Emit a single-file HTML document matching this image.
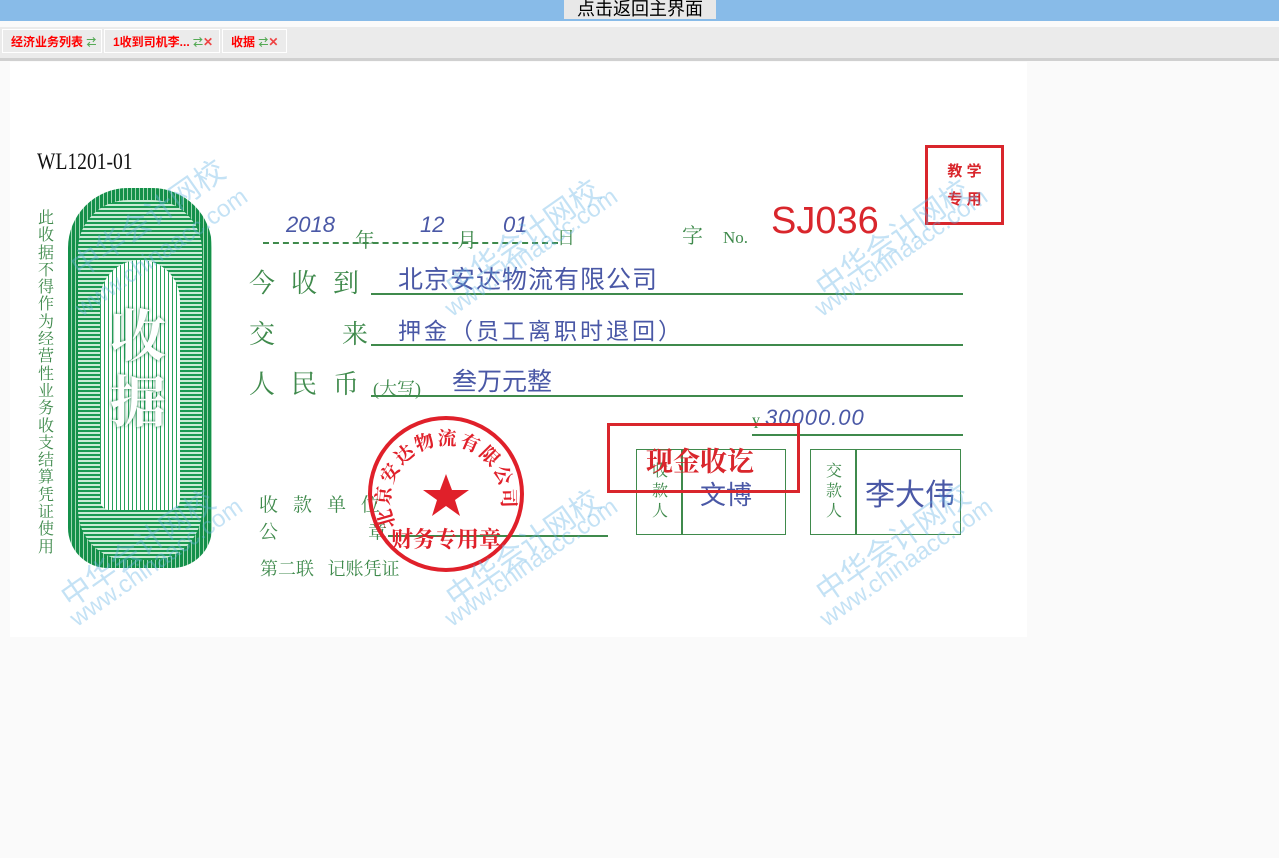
<!DOCTYPE html>
<html><head><meta charset="utf-8"><style>
body{margin:0;width:1279px;height:858px;background:#fafafa;font-family:"Liberation Sans","Noto Sans CJK SC",sans-serif;position:relative;overflow:hidden}
.a{position:absolute;white-space:nowrap}
.g{color:#3f8a4c;font-family:"Liberation Serif","Noto Serif CJK SC",serif}
.b{color:#4a58a6;font-family:"Liberation Sans","WenQuanYi Zen Hei",sans-serif;font-style:italic}
.ln{position:absolute;height:2px;background:#3f8a4c}
.tab{position:absolute;top:29px;height:24px;background:#ebebeb;border:1px solid #fff;font-size:12px;font-weight:bold;color:#f00;line-height:24px;padding-left:8px;box-sizing:border-box}
.wm{position:absolute;color:rgba(100,180,230,.38);font-size:30px;transform:rotate(-35deg);white-space:nowrap;transform-origin:left top}
</style></head><body>
<div class="a" style="left:0;top:0;width:1279px;height:21px;background:#88bbe8"></div>
<div class="a" style="left:564px;top:0;width:152px;height:19px;background:#e8e8e8;font-size:18px;line-height:19px;text-align:center;color:#000">点击返回主界面</div>
<div class="a" style="left:0;top:27px;width:1279px;height:31px;background:#ebebeb"></div>
<div class="a" style="left:0;top:58px;width:1279px;height:3px;background:#d0d0d0"></div>
<div class="tab" style="left:2px;width:100px">经济业务列表 <span style="color:#5a5;font-size:10px">⇄</span></div>
<div class="tab" style="left:104px;width:116px">1收到司机李... <span style="color:#5a5;font-size:10px">⇄</span><span style="color:#e44">✕</span></div>
<div class="tab" style="left:222px;width:65px">收据 <span style="color:#5a5;font-size:10px">⇄</span><span style="color:#e44">✕</span></div>
<div class="a" style="left:10px;top:62px;width:1017px;height:575px;background:#fff"></div>

<div class="a" style="left:37px;top:149px;font-size:23px;font-family:'Liberation Serif',serif;color:#111;transform:scaleX(.85);transform-origin:left top">WL1201-01</div>
<div class="a g" style="left:38px;top:210px;width:18px;font-size:16px;line-height:17.3px;white-space:normal">此收据不得作为经营性业务收支结算凭证使用</div>
<div class="a" style="left:68px;top:188px;width:144px;height:380px;border-radius:60px 60px 40px 40px;background:repeating-linear-gradient(90deg,#14904a 0 3px,#9fd6b2 3px 4px);"></div>
<div class="a" style="left:78px;top:200px;width:124px;height:360px;border-radius:50px;background:repeating-linear-gradient(0deg,#1a9a52 0 2px,#c9ebd5 2px 4px)"></div>
<div class="a" style="left:100px;top:260px;width:80px;height:250px;border-radius:40px 40px 10px 10px;background:repeating-linear-gradient(90deg,#26a25c 0 1px,#fff 1px 4px)"></div>
<div class="a" style="left:110px;top:300px;font-size:56px;font-weight:bold;line-height:66px;color:#fff;width:60px;text-shadow:0 0 3px #0a7a3a;font-family:'Noto Serif CJK SC',serif">收<br>据</div>

<div class="a b" style="left:286px;top:212px;font-size:22px">2018</div>
<div class="a g" style="left:355px;top:224px;font-size:20px">年</div>
<div class="a b" style="left:420px;top:212px;font-size:22px">12</div>
<div class="a g" style="left:457px;top:224px;font-size:20px">月</div>
<div class="a b" style="left:503px;top:212px;font-size:22px">01</div>
<div class="a g" style="left:557px;top:224px;font-size:18px">日</div>
<div class="a" style="left:263px;top:242px;width:295px;border-top:2px dashed #3f8a4c"></div>
<div class="a g" style="left:682px;top:220px;font-size:21px">字</div>
<div class="a g" style="left:723px;top:228px;font-size:17px">No.</div>
<div class="a" style="left:771px;top:200px;font-size:38px;color:#d9262c">SJ036</div>
<div class="a" style="left:925px;top:145px;width:79px;height:80px;border:3px solid #d9262c;color:#d9262c;font-size:15px;font-weight:bold;text-align:center;line-height:28px;padding-top:10px;box-sizing:border-box">教 学<br>专 用</div>

<div class="a g" style="left:249px;top:263px;font-size:26px;letter-spacing:16px">今收到</div>
<div class="ln" style="left:371px;top:293px;width:592px"></div>
<div class="a b" style="left:398px;top:260px;font-size:25px;font-style:normal;letter-spacing:1px">北京安达物流有限公司</div>
<div class="a g" style="left:249px;top:314px;font-size:26px">交</div>
<div class="a g" style="left:342px;top:314px;font-size:26px">来</div>
<div class="ln" style="left:371px;top:344px;width:592px"></div>
<div class="a b" style="left:398px;top:312px;font-size:23px;font-style:normal;letter-spacing:3px">押金（员工离职时退回）</div>
<div class="a g" style="left:249px;top:364px;font-size:26px;letter-spacing:16px">人民币</div>
<div class="a g" style="left:373px;top:375px;font-size:18px">(大写)</div>
<div class="a b" style="left:452px;top:362px;font-size:25px;font-style:normal">叁万元整</div>
<div class="ln" style="left:371px;top:395px;width:592px"></div>
<div class="a g" style="left:752px;top:415px;font-size:16px">¥</div>
<div class="a b" style="left:765px;top:405px;font-size:22px;letter-spacing:1px">30000.00</div>
<div class="ln" style="left:752px;top:434px;width:211px"></div>

<div class="a" style="left:636px;top:449px;width:150px;height:86px;border:1px solid #3f8a4c;box-sizing:border-box"></div>
<div class="a" style="left:681px;top:449px;width:2px;height:86px;background:#3f8a4c"></div>
<div class="a g" style="left:652px;top:462px;font-size:16px;line-height:20px;width:18px;white-space:normal">收款人</div>
<div class="a b" style="left:700px;top:475px;font-size:26px;font-style:normal">文博</div>
<div class="a" style="left:810px;top:449px;width:151px;height:86px;border:1px solid #3f8a4c;box-sizing:border-box"></div>
<div class="a" style="left:855px;top:449px;width:2px;height:86px;background:#3f8a4c"></div>
<div class="a g" style="left:826px;top:462px;font-size:16px;line-height:20px;width:18px;white-space:normal">交款人</div>
<div class="a b" style="left:865px;top:470px;font-size:30px;font-style:normal">李大伟</div>
<div class="a" style="left:607px;top:423px;width:193px;height:70px;border:3px solid #d9262c;box-sizing:border-box"></div>
<div class="a" style="left:646px;top:440px;font-size:27px;font-weight:bold;color:#d9262c;font-family:'Noto Serif CJK SC',serif">现金收讫</div>

<div class="a g" style="left:259px;top:490px;font-size:19px;letter-spacing:15px">收款单位</div>
<div class="a g" style="left:259px;top:517px;font-size:19px">公</div>
<div class="a g" style="left:368px;top:517px;font-size:19px">章</div>
<div class="ln" style="left:388px;top:535px;width:220px"></div>
<div class="a g" style="left:260px;top:555px;font-size:18px">第二联&nbsp;&nbsp;&nbsp;记账凭证</div>

<svg class="a" style="left:366px;top:414px" width="160" height="160" viewBox="0 0 160 160">
<circle cx="80" cy="80" r="76" fill="none" stroke="#e0202a" stroke-width="4"/>
<defs><path id="arc" d="M30 112 A56 56 0 1 1 132 108"/></defs>
<text font-size="19" fill="#e0202a" font-family="Noto Serif CJK SC,serif" font-weight="bold" letter-spacing="2"><textPath href="#arc">北京安达物流有限公司</textPath></text>
<polygon fill="#e0202a" points="80,60 86,76 103,76 89,86 94,102 80,92 66,102 71,86 57,76 74,76"/>
<text x="80" y="133" text-anchor="middle" font-size="22" fill="#e0202a" font-weight="bold" font-family="Noto Serif CJK SC,serif">财务专用章</text>
</svg>

<div class="wm" style="left:60px;top:250px">中华会计网校</div>
<div class="wm" style="left:70px;top:300px;font-size:24px">www.chinaacc.com</div>
<div class="wm" style="left:435px;top:270px">中华会计网校</div>
<div class="wm" style="left:440px;top:300px;font-size:24px">www.chinaacc.com</div>
<div class="wm" style="left:805px;top:270px">中华会计网校</div>
<div class="wm" style="left:810px;top:300px;font-size:24px">www.chinaacc.com</div>
<div class="wm" style="left:50px;top:580px">中华会计网校</div>
<div class="wm" style="left:65px;top:610px;font-size:24px">www.chinaacc.com</div>
<div class="wm" style="left:435px;top:580px">中华会计网校</div>
<div class="wm" style="left:440px;top:610px;font-size:24px">www.chinaacc.com</div>
<div class="wm" style="left:805px;top:575px">中华会计网校</div>
<div class="wm" style="left:815px;top:610px;font-size:24px">www.chinaacc.com</div>
</body></html>
